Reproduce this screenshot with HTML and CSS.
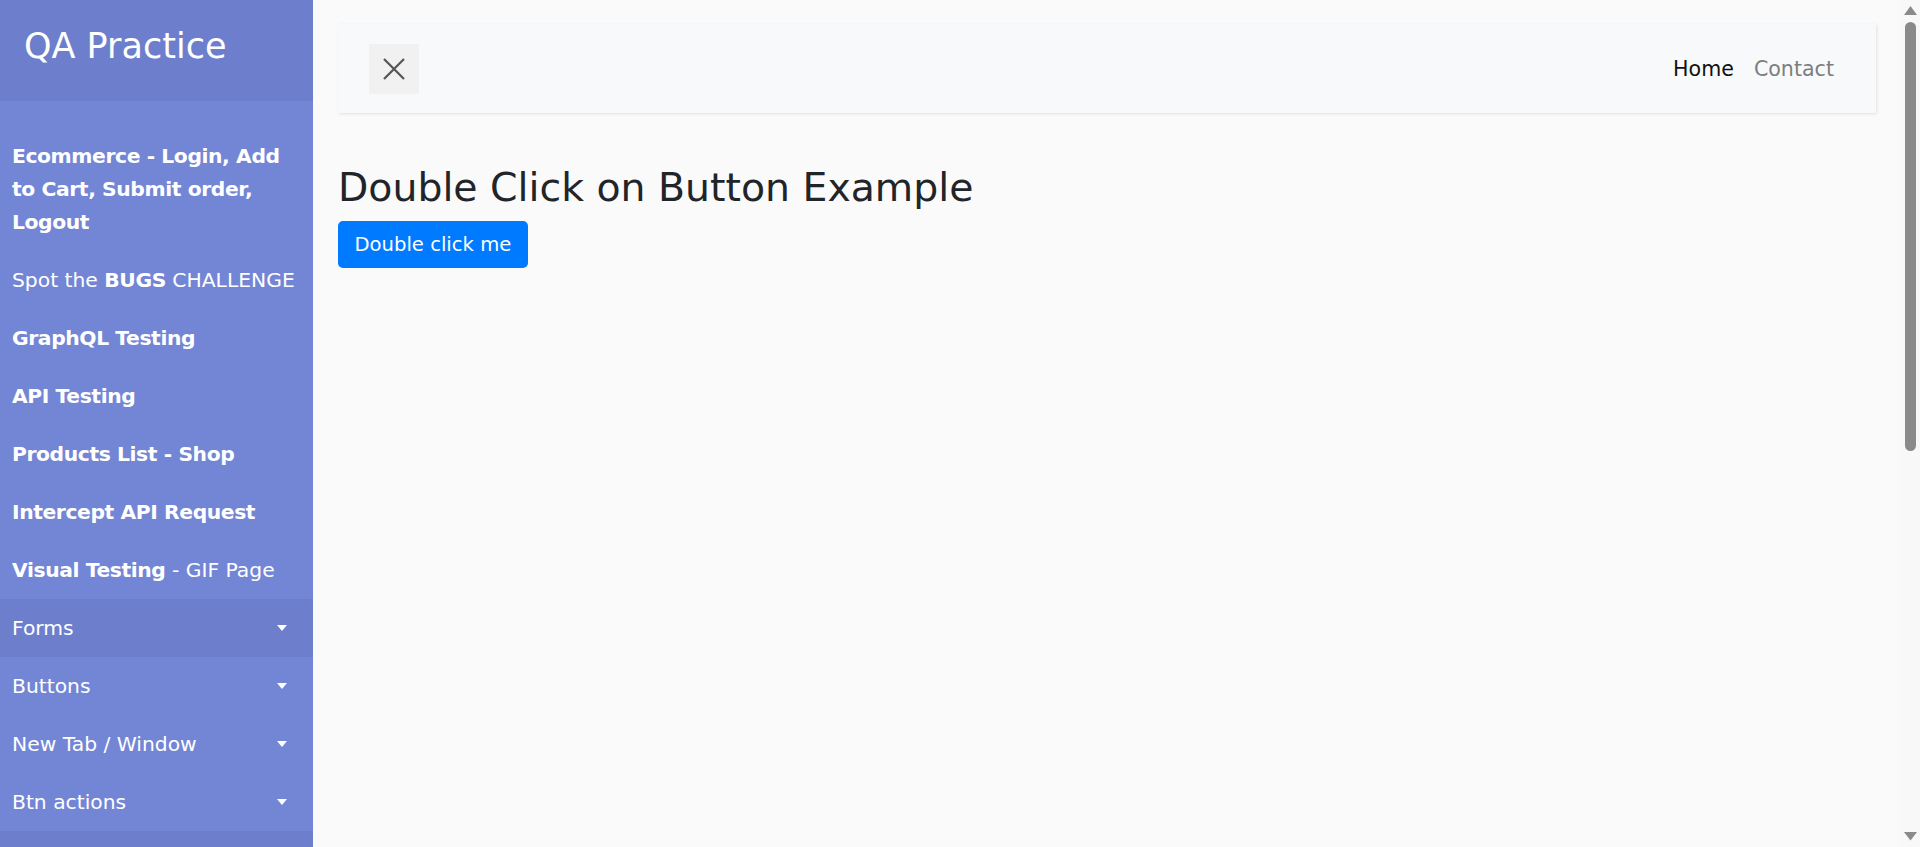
FILE: index.html
```html
<!DOCTYPE html>
<html lang="en">
<head>
<meta charset="utf-8">
<title>QA Practice | Double Click</title>
<link rel="stylesheet" href="styles.css">
</head>
<body>
<div class="wrapper">
  <nav class="sidebar">
    <div class="sidebar-header">
      <h3 class="brand">QA Practice</h3>
    </div>
    <ul class="menu">
      <li><a class="menu-link" href="#"><strong>Ecommerce - Login, Add to Cart, Submit order, Logout</strong></a></li>
      <li><a class="menu-link" href="#">Spot the <strong>BUGS</strong> CHALLENGE</a></li>
      <li><a class="menu-link" href="#"><strong>GraphQL Testing</strong></a></li>
      <li><a class="menu-link" href="#"><strong>API Testing</strong></a></li>
      <li><a class="menu-link" href="#"><strong>Products List - Shop</strong></a></li>
      <li><a class="menu-link" href="#"><strong>Intercept API Request</strong></a></li>
      <li><a class="menu-link" href="#"><strong>Visual Testing</strong> - GIF Page</a></li>
      <li><a class="menu-link dropdown is-dark" href="#">Forms</a></li>
      <li><a class="menu-link dropdown" href="#">Buttons</a></li>
      <li><a class="menu-link dropdown" href="#">New Tab / Window</a></li>
      <li><a class="menu-link dropdown" href="#">Btn actions</a></li>
    </ul>
    <div class="menu-tail" aria-hidden="true"></div>
  </nav>
  <main class="content">
    <div class="navbar">
      <button class="close-btn" type="button" aria-label="Close sidebar">
        <svg width="24" height="24" viewBox="0 0 24 24" aria-hidden="true">
          <path d="M2 2 L22 22 M22 2 L2 22" stroke="#555" stroke-width="2.2" fill="none"/>
        </svg>
      </button>
      <ul class="nav-links">
        <li><a class="nav-link active" href="#">Home</a></li>
        <li><a class="nav-link" href="#">Contact</a></li>
      </ul>
    </div>
    <h2 class="page-title">Double Click on Button Example</h2>
    <button class="btn-primary" type="button">Double click me</button>
  </main>
</div>
<div class="scrollbar" aria-hidden="true">
  <svg class="sb-arrow sb-up" width="20" height="17" viewBox="0 0 20 17"><polygon points="4,15 17,15 10.5,6" fill="#8a8a8a"/></svg>
  <div class="sb-thumb"></div>
  <svg class="sb-arrow sb-down" width="20" height="17" viewBox="0 0 20 17"><polygon points="4,2 17,2 10.5,10.5" fill="#8a8a8a"/></svg>
</div>
</body>
</html>
```
FILE: styles.css
```css
html, body {
  margin: 0;
  padding: 0;
}
body {
  background: #fafafa;
  font-family: "DejaVu Sans", "Liberation Sans", sans-serif;
  color: #212529;
}
.wrapper {
  display: flex;
  align-items: stretch;
  width: calc(100% - 20px);
  min-height: 100vh;
}
.sidebar {
  width: 313px;
  flex: 0 0 313px;
  display: flex;
  flex-direction: column;
  background: #7386d5;
  color: #fff;
}
.sidebar-header {
  background: #6d7fcc;
  padding: 26px 24px 34px 24px;
}
.brand {
  margin: 0;
  font-size: 35px;
  line-height: 41px;
  font-weight: 400;
  color: #fff;
}
.menu {
  list-style: none;
  margin: 0;
  padding: 26px 0 0 0;
}
.menu li {
  margin: 0;
}
.menu-link {
  position: relative;
  display: block;
  padding: 12.5px 12px;
  font-size: 20.3px;
  line-height: 33px;
  color: #fff;
  text-decoration: none;
}
.menu-link strong {
  font-weight: 700;
  letter-spacing: -0.4px;
}
.is-dark {
  background: #6d7fcc;
}
.dropdown::after {
  content: "";
  position: absolute;
  right: 26px;
  top: 50%;
  margin-top: -3px;
  border-top: 6px solid #fff;
  border-left: 5.5px solid transparent;
  border-right: 5.5px solid transparent;
}
.menu-tail {
  flex: 1;
  background: #6d7fcc;
}
.content {
  flex: 1;
  min-width: 0;
  padding: 24px 24px 24px 25px;
}
.navbar {
  display: flex;
  align-items: center;
  justify-content: space-between;
  height: 89px;
  box-sizing: border-box;
  padding: 0 32px 0 31px;
  background: #f8f9fa;
  box-shadow: 1px 1px 3px rgba(0, 0, 0, 0.1);
  margin-bottom: 51px;
}
.close-btn {
  width: 50px;
  height: 50px;
  padding: 0;
  border: none;
  border-radius: 0;
  background: #f1f1f1;
  display: flex;
  align-items: center;
  justify-content: center;
}
.nav-links {
  list-style: none;
  display: flex;
  margin: 0;
  padding: 0;
}
.nav-link {
  display: block;
  padding: 0 10px;
  font-size: 20.6px;
  line-height: 30px;
  color: #7d7e7f;
  text-decoration: none;
}
.nav-link.active {
  color: #111;
}
.page-title {
  margin: 0 0 10px 0;
  font-size: 39.4px;
  line-height: 47px;
  font-weight: 400;
  color: #212529;
}
.btn-primary {
  display: inline-block;
  height: 47px;
  padding: 0 16.5px;
  border: none;
  border-radius: 5px;
  background: #007bff;
  color: #fff;
  font-family: "DejaVu Sans", "Liberation Sans", sans-serif;
  font-size: 19.6px;
}
.scrollbar {
  position: fixed;
  top: 0;
  right: 0;
  bottom: 0;
  width: 20px;
  background: #f8f8f8;
}
.sb-arrow {
  position: absolute;
  left: 0;
  display: block;
}
.sb-up {
  top: 0;
}
.sb-down {
  bottom: 0;
}
.sb-thumb {
  position: absolute;
  left: 5px;
  top: 22px;
  width: 11px;
  height: 429px;
  border-radius: 5.5px;
  background: #8a8a8a;
}
```
